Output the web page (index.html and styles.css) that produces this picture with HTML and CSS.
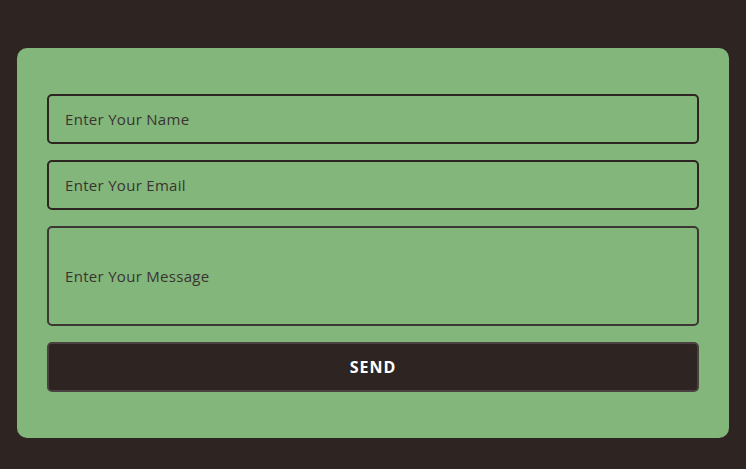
FILE: index.html
```html
<!DOCTYPE html>
<html>
<head>
<meta charset="utf-8">
<link rel="stylesheet" href="styles.css">
</head>
<body>
<div class="page">
  <form class="card">
    <input class="field" type="text" placeholder="Enter Your Name">
    <input class="field" type="email" placeholder="Enter Your Email">
    <textarea class="field message" placeholder="Enter Your Message"></textarea>
    <button class="send" type="button">SEND</button>
  </form>
</div>
</body>
</html>
```
FILE: styles.css
```css
html, body {
  margin: 0;
  padding: 0;
  background: #2e2523;
  height: 100%;
}
.page {
  padding: 48px 17px 0 17px;
}
.card {
  background: #83b67b;
  border-radius: 10px;
  padding: 46px 30px 46px 30px;
  display: flex;
  flex-direction: column;
  gap: 16px;
}
.field {
  box-sizing: border-box;
  width: 100%;
  height: 50px;
  background: transparent;
  border: 2px solid #2e2523;
  border-radius: 5px;
  padding: 0 16px;
  font-family: "Open Sans", sans-serif;
  font-size: 15px;
  letter-spacing: 0.3px;
  color: #2e2523;
  outline: none;
  margin: 0;
}
.field::placeholder {
  color: #3b3331;
  opacity: 1;
}
.message {
  height: 100px;
  resize: none;
  border-color: #3e3634;
  padding-top: 37px;
  line-height: 22px;
}
.send {
  box-sizing: border-box;
  width: 100%;
  height: 50px;
  background: #2e2523;
  border: 2px solid #4a4240;
  border-radius: 5px;
  color: #ffffff;
  font-family: "Open Sans", sans-serif;
  font-weight: 700;
  font-size: 16px;
  letter-spacing: 1px;
  margin: 0;
}
```
